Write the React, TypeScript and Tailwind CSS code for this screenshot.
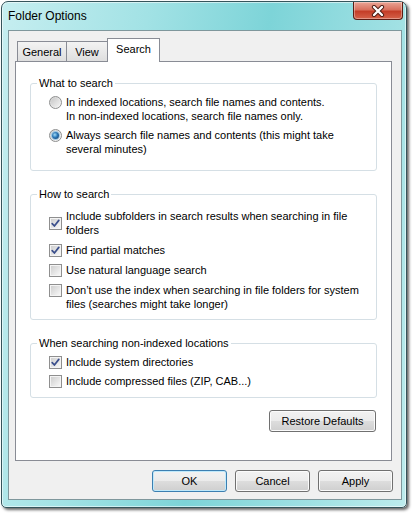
import type { ReactNode } from 'react'

const font = { fontFamily: '"Liberation Sans", Arial, sans-serif' }

const Radio = ({ checked }: { checked?: boolean }) => (
  <div className="w-[13px] h-[13px] shrink-0 rounded-full border border-[#8e8f8f] bg-[linear-gradient(135deg,#d0d0d0,#fafafa)] flex items-center justify-center">
    {checked ? (
      <div className="w-[7px] h-[7px] rounded-full bg-[radial-gradient(circle_at_40%_40%,#a5dcf6_0%,#2a78b8_45%,#0d2f5a_100%)] ring-1 ring-[#9cc6e2]" />
    ) : (
      <div className="w-[9px] h-[9px] rounded-full bg-[linear-gradient(135deg,#c8c8c8,#f3f3f3)]" />
    )}
  </div>
)

const Checkbox = ({ checked }: { checked?: boolean }) => (
  <div className="w-[13px] h-[13px] shrink-0 border border-[#8f8f8f] bg-[#f4f4f4] flex items-center justify-center">
    <div className="w-[9px] h-[9px] bg-[linear-gradient(135deg,#cfcfcf,#f7f7f7)] flex items-center justify-center">
      {checked && (
        <svg width="9" height="9" viewBox="0 0 9 9" fill="none">
          <path d="M1.2 4.6 L3.4 7 L7.8 1.4" stroke="#3b4f8c" strokeWidth="1.7" strokeLinecap="round" strokeLinejoin="round" />
        </svg>
      )}
    </div>
  </div>
)

const Row = ({ control, children }: { control: ReactNode; children: ReactNode }) => (
  <div className="flex gap-[4px] items-start">
    <div className="h-[14px] flex items-center">{control}</div>
    <div className="leading-[14px]">{children}</div>
  </div>
)

const Group = ({ title, className, children }: { title: string; className: string; children: ReactNode }) => (
  <fieldset className={`mx-[14px] border border-[#d5dfe5] rounded-[3px] ${className}`}>
    <legend className="ml-[6px] px-[2px] leading-[14px]">{title}</legend>
    {children}
  </fieldset>
)

const Button = ({ label, primary, className = '' }: { label: string; primary?: boolean; className?: string }) => (
  <button
    type="button"
    className={`h-[22px] rounded-[3px] border text-[11px] text-black bg-[linear-gradient(#f2f2f2_0%,#ebebeb_50%,#dddddd_51%,#cfcfcf_100%)] ${
      primary
        ? 'border-[#3c7fb1] shadow-[inset_0_0_0_1px_#bfe9fb]'
        : 'border-[#707070] shadow-[inset_0_0_0_1px_#fbfbfb]'
    } ${className}`}
    style={font}
  >
    {label}
  </button>
)

export default function App() {
  return (
    <div className="w-[413px] h-[513px] bg-white pt-[1px] pl-[1px] text-[11px] text-black" style={font}>
      <div className="w-[406px] h-[507px] rounded-t-[7px] rounded-b-[5px] border border-[#35545b] bg-[linear-gradient(100deg,#c6eef0_0%,#a2e2e5_30%,#7dd4d8_55%,#9fe0e3_80%,#bdeced_100%)] shadow-[2px_2px_3px_rgba(0,0,0,0.6),inset_0_0_0_1px_rgba(255,255,255,0.55)] flex flex-col">
        {/* Title bar */}
        <div className="h-[28px] flex items-start justify-between shrink-0">
          <div className="mt-[7px] ml-[6px] text-[12px] leading-[14px]">Folder Options</div>
          <div className="mr-[3px] w-[50px] h-[18px] rounded-b-[4px] border border-t-0 border-[#5b1d14] bg-[linear-gradient(#eaa596_0%,#d9715e_45%,#c43d27_55%,#d5624a_100%)] shadow-[inset_0_0_0_1px_rgba(255,255,255,0.35)] flex items-center justify-center">
            <svg width="14" height="12" viewBox="0 0 14 12">
              <path d="M3 2 L11 10 M11 2 L3 10" stroke="#4a1a12" strokeWidth="4.2" strokeLinecap="round" />
              <path d="M3 2 L11 10 M11 2 L3 10" stroke="#ffffff" strokeWidth="2.4" strokeLinecap="round" />
            </svg>
          </div>
        </div>

        {/* Client area */}
        <div className="ml-[6px] w-[394px] h-[470px] border border-[#7f979c] bg-[#f0f0f0] flex flex-col pl-[6px] pt-[7px]">
          {/* Tabs */}
          <div className="flex items-end h-[24px] -mb-[1px] pl-[2px] relative z-10">
            <div className="w-[50px] h-[20px] mb-[1px] border border-b-0 border-[#898c95] bg-[linear-gradient(#f3f3f3,#dedede)] flex items-center justify-center leading-[14px]">
              General
            </div>
            <div className="w-[41px] h-[20px] mb-[1px] border border-b-0 border-l-0 border-[#898c95] bg-[linear-gradient(#f3f3f3,#dedede)] flex items-center justify-center leading-[14px]">
              View
            </div>
            <div className="w-[53px] h-[24px] border border-b-0 border-[#898c95] bg-white flex items-start justify-center pt-[3px] leading-[14px] -ml-[1px]">
              Search
            </div>
          </div>

          {/* Panel */}
          <div className="w-[377px] h-[400px] border border-[#898c95] bg-white flex flex-col pt-[14px]">
            <Group title="What to search" className="pt-[5px] pb-[14px]">
              <div className="flex flex-col gap-[5px] pl-[18px]">
                <Row control={<Radio />}>
                  In indexed locations, search file names and contents.
                  <br />
                  In non-indexed locations, search file names only.
                </Row>
                <Row control={<Radio checked />}>
                  Always search file names and contents (this might take
                  <br />
                  several minutes)
                </Row>
              </div>
            </Group>

            <Group title="How to search" className="mt-[16px] pt-[8px] pb-[8px]">
              <div className="flex flex-col gap-[6px] pl-[18px]">
                <div className="flex items-center gap-[4px]">
                  <Checkbox checked />
                  <div className="leading-[14px]">
                    Include subfolders in search results when searching in file
                    <br />
                    folders
                  </div>
                </div>
                <Row control={<Checkbox checked />}>Find partial matches</Row>
                <Row control={<Checkbox />}>Use natural language search</Row>
                <Row control={<Checkbox />}>
                  Don’t use the index when searching in file folders for system
                  <br />
                  files (searches might take longer)
                </Row>
              </div>
            </Group>

            <Group title="When searching non-indexed locations" className="mt-[16px] pt-[5px] pb-[9px]">
              <div className="flex flex-col gap-[5px] pl-[18px]">
                <Row control={<Checkbox checked />}>Include system directories</Row>
                <Row control={<Checkbox />}>Include compressed files (ZIP, CAB...)</Row>
              </div>
            </Group>

            <div className="flex justify-end mt-[12px] mr-[15px]">
              <Button label="Restore Defaults" className="w-[107px]" />
            </div>
          </div>

          {/* Dialog buttons */}
          <div className="flex justify-end gap-[8px] mt-[9px] pr-[8px]">
            <Button label="OK" primary className="w-[75px]" />
            <Button label="Cancel" className="w-[75px]" />
            <Button label="Apply" className="w-[75px]" />
          </div>
        </div>
      </div>
    </div>
  )
}
